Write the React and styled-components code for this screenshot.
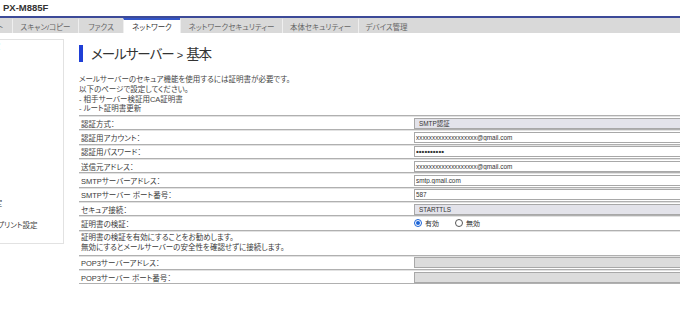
import React from "react";
import styled, { createGlobalStyle } from "styled-components";

const GlobalStyle = createGlobalStyle`
  html, body {
    margin: 0;
    padding: 0;
    overflow: hidden;
    background: #fff;
  }
  body {
    font-family: "Liberation Sans", "Noto Sans CJK JP", sans-serif;
    font-feature-settings: "palt";
    color: #333;
  }
`;

const Title = styled.div`
  height: 16px;
  padding: 3px 0 0 3px;
  box-sizing: border-box;
  font: bold 9.5px/1 "Liberation Sans", sans-serif;
  color: #333;
`;

const Rule = styled.div`
  height: 2px;
  background: #3c4a98;
`;

const TabBar = styled.nav`
  display: flex;
  height: 15px;
  background: #d9d9d9;
  overflow: hidden;
`;

const Tab = styled.div`
  flex: none;
  width: ${(p) => p.$w}px;
  margin-left: ${(p) => p.$offset || 0}px;
  box-sizing: border-box;
  display: flex;
  align-items: center;
  justify-content: center;
  border-left: 1px solid #efefef;
  border-top: 2px solid ${(p) => (p.$active ? "#3355c8" : "transparent")};
  background: ${(p) => (p.$active ? "#fff" : "transparent")};
  font-size: 7.5px;
  color: ${(p) => (p.$active ? "#333" : "#666")};
  white-space: nowrap;
`;

const Body = styled.div`
  display: flex;
  align-items: flex-start;
  gap: 15px;
  margin-top: 6px;
`;

const Sidebar = styled.aside`
  flex: none;
  width: 150px;
  margin-left: -86px;
  padding: 1px 0 0 10px;
  box-sizing: border-box;
  border: 1px solid #e2e2e2;
  border-left: none;
`;

const SideItem = styled.div`
  height: 22.4px;
  padding-top: 1px;
  box-sizing: border-box;
  font-size: 7.5px;
  line-height: 9px;
  color: #444;
  white-space: nowrap;
`;

const Main = styled.main`
  flex: none;
  width: 720px;
  padding-top: 6px;
`;

const Heading = styled.h1`
  margin: 0;
  height: 17px;
  padding-left: 8px;
  border-left: 4px solid #1f3fd6;
  font: normal 13.5px/17px "Noto Sans CJK JP", sans-serif;
  font-feature-settings: "palt";
  letter-spacing: -1px;
  color: #333;
`;

const Sep = styled.span`
  font-family: "Liberation Sans", sans-serif;
  font-size: 11px;
  letter-spacing: 0;
  margin: 0 3px;
`;

const Intro = styled.div`
  margin: 13px 0 1px;
  font-size: 7.5px;
  line-height: 9.8px;
  color: #444;
`;

const Table = styled.div`
  border-top: 1px solid #b0b0b0;
`;

const Row = styled.div`
  display: grid;
  grid-template-columns: 334px 1fr;
  align-items: center;
  height: ${(p) => (p.$tall ? 25 : 14.3)}px;
  box-sizing: border-box;
  border-top: 1px solid #e2e2e2;
  border-bottom: 1px solid #b0b0b0;
`;

const Label = styled.div`
  padding-left: 2px;
  font-size: 7.5px;
  color: #3a3a3a;
  white-space: nowrap;
`;

const Note = styled.div`
  grid-column: 1 / -1;
  padding-left: 2px;
  font-size: 7.5px;
  line-height: 10px;
  color: #3a3a3a;
`;

const Value = styled.div`
  display: flex;
  align-items: center;
  gap: 4px;
  padding-left: 1px;
`;

const fieldBg = { text: "#fff", select: "#e3e3ea", disabled: "#dcdcdc" };

const Field = styled.input`
  width: 100%;
  height: 11px;
  margin: 0;
  padding: 0 ${(p) => (p.$kind === "select" ? 4 : 1)}px;
  box-sizing: border-box;
  border: 1px solid #a8a8a8;
  border-radius: 0;
  background: ${(p) => fieldBg[p.$kind || "text"]};
  font: ${(p) => (p.type === "password" ? "bold 8px" : "6.4px")} "Liberation Sans", "Noto Sans CJK JP", sans-serif;
  color: #333;
  outline: none;
`;

const RadioLabel = styled.label`
  display: flex;
  align-items: center;
  gap: 3px;
  margin-right: 12px;
  font-size: 7px;
  color: #333;
`;

const RadioDot = styled.span`
  width: 8px;
  height: 8px;
  box-sizing: border-box;
  border-radius: 50%;
  border: 1px solid ${(p) => (p.$on ? "#1a62d6" : "#555")};
  display: flex;
  align-items: center;
  justify-content: center;
  &::after {
    content: "";
    width: 4px;
    height: 4px;
    border-radius: 50%;
    background: ${(p) => (p.$on ? "#1a62d6" : "transparent")};
  }
`;

const tabs = [
  { name: "プリント", w: 44, offset: -32 },
  { name: "スキャン/コピー", w: 66 },
  { name: "ファクス", w: 45 },
  { name: "ネットワーク", w: 57, active: true },
  { name: "ネットワークセキュリティー", w: 102 },
  { name: "本体セキュリティー", w: 76 },
  { name: "デバイス管理", w: 56 },
];

const sideItems = [
  "有線LAN/無線LAN設定",
  "基本",
  "",
  "",
  "",
  "",
  "",
  "Web Services 基本設定",
  "Microsoftユニバーサルプリント設定",
];

const rows = [
  { label: "認証方式：", value: "SMTP認証", kind: "select" },
  { label: "認証用アカウント：", value: "xxxxxxxxxxxxxxxxxxx@gmail.com" },
  { label: "認証用パスワード：", value: "xxxxxxxxxx", type: "password" },
  { label: "送信元アドレス：", value: "xxxxxxxxxxxxxxxxxxx@gmail.com" },
  { label: "SMTPサーバーアドレス：", value: "smtp.gmail.com" },
  { label: "SMTPサーバー ポート番号：", value: "587" },
  { label: "セキュア接続：", value: "STARTTLS", kind: "select" },
];

export default function App() {
  return (
    <>
      <GlobalStyle />
      <Title>PX-M885F</Title>
      <Rule />
      <TabBar>
        {tabs.map((t) => (
          <Tab key={t.name} $w={t.w} $offset={t.offset} $active={t.active}>
            {t.name}
          </Tab>
        ))}
      </TabBar>
      <Body>
        <Sidebar>
          {sideItems.map((s, i) => (
            <SideItem key={i}>{s}</SideItem>
          ))}
        </Sidebar>
        <Main>
          <Heading>
            メールサーバー<Sep>&gt;</Sep>基本
          </Heading>
          <Intro>
            メールサーバーのセキュア機能を使用するには証明書が必要です。
            <br />
            以下のページで設定してください。
            <br />- 相手サーバー検証用CA証明書
            <br />- ルート証明書更新
          </Intro>
          <Table>
            {rows.map((r) => (
              <Row key={r.label}>
                <Label>{r.label}</Label>
                <Value>
                  <Field readOnly type={r.type || "text"} $kind={r.kind} value={r.value} />
                </Value>
              </Row>
            ))}
            <Row>
              <Label>証明書の検証：</Label>
              <Value>
                <RadioLabel>
                  <RadioDot $on />
                  有効
                </RadioLabel>
                <RadioLabel>
                  <RadioDot />
                  無効
                </RadioLabel>
              </Value>
            </Row>
            <Row $tall>
              <Note>
                証明書の検証を有効にすることをお勧めします。
                <br />
                無効にするとメールサーバーの安全性を確認せずに接続します。
              </Note>
            </Row>
            <Row>
              <Label>POP3サーバーアドレス：</Label>
              <Value>
                <Field readOnly disabled $kind="disabled" value="" />
              </Value>
            </Row>
            <Row>
              <Label>POP3サーバー ポート番号：</Label>
              <Value>
                <Field readOnly disabled $kind="disabled" value="" />
              </Value>
            </Row>
          </Table>
        </Main>
      </Body>
    </>
  );
}
